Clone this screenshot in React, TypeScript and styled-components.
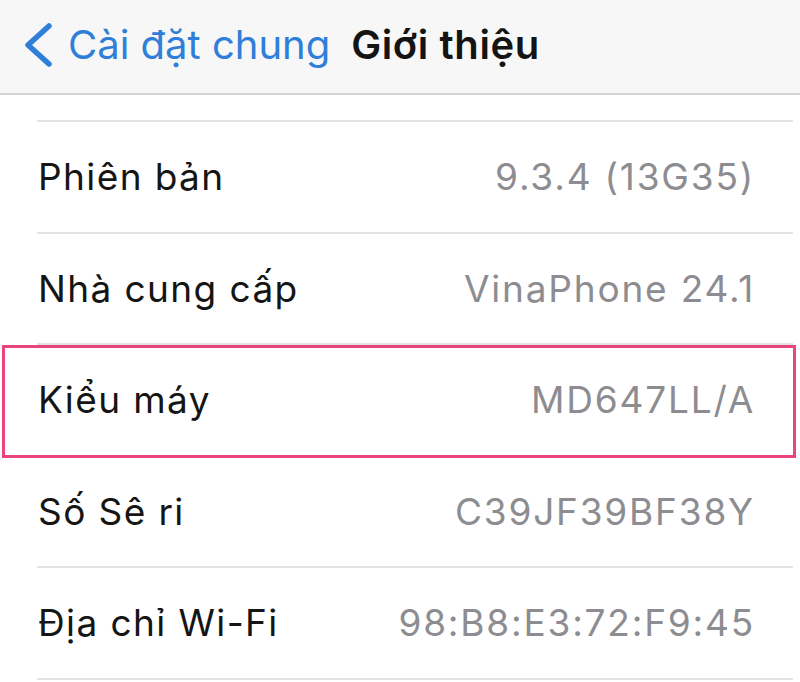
import styled, { createGlobalStyle } from 'styled-components';

const GlobalStyle = createGlobalStyle`
  html, body {
    margin: 0;
    padding: 0;
    background: #ffffff;
  }
  body {
    font-family: Inter, "Noto Sans", "Liberation Sans", sans-serif;
    -webkit-font-smoothing: antialiased;
  }
`;

type RowProps = {
  $highlight?: boolean;
};

const rows = [
  { label: 'Phiên bản', value: '9.3.4 (13G35)' },
  { label: 'Nhà cung cấp', value: 'VinaPhone 24.1' },
  { label: 'Kiểu máy', value: 'MD647LL/A', highlight: true },
  { label: 'Số Sê ri', value: 'C39JF39BF38Y' },
  { label: 'Địa chỉ Wi-Fi', value: '98:B8:E3:72:F9:45' },
];

const Screen = styled.div`
  width: 800px;
  height: 682px;
  overflow: hidden;
  background: #ffffff;
`;

const NavBar = styled.header`
  height: 95px;
  display: flex;
  align-items: center;
  padding: 0 0 4px 22px;
  box-sizing: border-box;
  background: #f7f7f7;
  border-bottom: 2px solid #d4d4d6;
`;

const BackButton = styled.div`
  display: flex;
  align-items: center;
  gap: 14px;
  color: #2f7fd9;
  font-size: 40px;
  letter-spacing: 0;
`;

const Title = styled.h1`
  margin: 0 0 0 21px;
  font-size: 40px;
  font-weight: 600;
  color: #141414;
  letter-spacing: 0.6px;
`;

const List = styled.div`
  padding-top: 25px;
`;

const TopRule = styled.div`
  margin-left: 37px;
  margin-right: 7px;
  border-top: 2px solid #e2e2e4;
`;

const Row = styled.div<RowProps>`
  position: relative;
  height: 109.5px;
  display: flex;
  align-items: center;
  justify-content: space-between;
  padding: 0 45px 0 38px;
  box-sizing: border-box;

  &::before {
    content: '';
    position: absolute;
    left: 37px;
    right: 7px;
    bottom: -2px;
    border-top: 2px solid #e2e2e4;
  }

  ${p =>
    p.$highlight &&
    `
    &::after {
      content: '';
      position: absolute;
      left: 2px;
      right: 4px;
      top: 0;
      bottom: -3px;
      border: 3px solid #e9457c;
      z-index: 2;
    }
  `}

  & + & {
    margin-top: 2px;
  }
`;

const Label = styled.span`
  font-size: 37px;
  color: #151515;
  letter-spacing: 1.4px;
`;

const Value = styled.span`
  font-size: 37px;
  color: #8d8d91;
  letter-spacing: 1.8px;
`;

const Chevron = () => (
  <svg width="32" height="44" viewBox="0 0 32 44" fill="none">
    <path
      d="M27 3 L6 22 L27 41"
      stroke="#2f7fd9"
      strokeWidth="5.5"
      strokeLinecap="round"
      strokeLinejoin="round"
    />
  </svg>
);

export default function App() {
  return (
    <Screen>
      <GlobalStyle />
      <NavBar>
        <BackButton>
          <Chevron />
          <span>Cài đặt chung</span>
        </BackButton>
        <Title>Giới thiệu</Title>
      </NavBar>
      <List>
        <TopRule />
        {rows.map(r => (
          <Row key={r.label} $highlight={r.highlight}>
            <Label>{r.label}</Label>
            <Value>{r.value}</Value>
          </Row>
        ))}
      </List>
    </Screen>
  );
}
